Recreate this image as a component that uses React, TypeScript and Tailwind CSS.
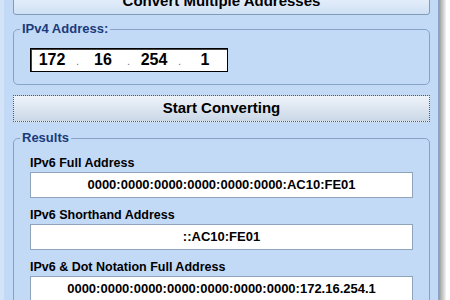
export default function App() {
  const octets = ["172", "16", "254", "1"];

  return (
    <div className="h-[300px] w-[450px] overflow-hidden bg-white font-['Liberation_Sans',Arial,sans-serif]">
      <div className="flex h-full">
        {/* window body */}
        <div className="h-full w-[439px] border-l-[4px] border-r border-l-[#d3e3f8] border-r-[#8aa4c4] bg-[#c3daf7]">
          <div className="-mt-[12px] flex flex-col pl-[9px] pr-[8px]">
            <button
              type="button"
              className="h-[27px] w-full rounded-[3px] border border-[#7f9db9] bg-gradient-to-b from-[#f2f7fd] to-[#cfe0f5] text-[15px] font-bold text-black"
            >
              Convert Multiple Addresses
            </button>

            <fieldset className="mt-[7px] rounded-[5px] border border-[#86a3c7] pb-[12px]">
              <legend className="ml-[6px] px-[2px] text-[13px] leading-[14px] font-bold text-[#1b3a7a]">
                IPv4 Address:
              </legend>
              <div className="ml-[16px] mt-[12px] flex h-[24px] w-[198px] items-baseline border border-black bg-white shadow-[inset_1px_1px_0_#444]">
                {octets.map((o, i) => (
                  <div key={i} className="flex items-baseline">
                    <span className="w-[42px] text-center text-[16px] leading-[22px] font-bold text-black">
                      {o}
                    </span>
                    {i < 3 && (
                      <span className="w-[9px] text-center text-[11px] text-[#777]">.</span>
                    )}
                  </div>
                ))}
              </div>
            </fieldset>

            <button
              type="button"
              className="mt-[10px] h-[27px] w-full border border-dotted border-[#5c5c48] bg-gradient-to-b from-[#eef3f9] via-[#dde6f0] to-[#c9d7e7] text-[15px] font-bold text-black"
            >
              Start Converting
            </button>

            <fieldset className="mt-[9px] h-[200px] rounded-[5px] border border-[#86a3c7]">
              <legend className="ml-[6px] px-[2px] text-[13px] leading-[14px] font-bold text-[#1b3a7a]">
                Results
              </legend>
              <div className="pl-[16px] pr-[16px]">
                <ResultField label="IPv6 Full Address" value="0000:0000:0000:0000:0000:0000:AC10:FE01" first />
                <ResultField label="IPv6 Shorthand Address" value="::AC10:FE01" />
                <ResultField
                  label="IPv6 & Dot Notation Full Address"
                  value="0000:0000:0000:0000:0000:0000:0000:172.16.254.1"
                />
              </div>
            </fieldset>
          </div>
        </div>
        {/* drop shadow of the window */}
        <div className="h-full w-[7px] bg-gradient-to-r from-[#9a9a9a] to-[#f4f4f4]" />
      </div>
    </div>
  );
}

function ResultField({ label, value, first }: { label: string; value: string; first?: boolean }) {
  return (
    <div className={first ? "mt-[11px]" : "mt-[10px]"}>
      <div className="text-[12.5px] leading-[14px] font-bold text-black">{label}</div>
      <div className="mt-[2px] flex h-[26px] items-center justify-center border border-[#8fa3bb] bg-white text-[13px] font-bold text-black">
        {value}
      </div>
    </div>
  );
}
